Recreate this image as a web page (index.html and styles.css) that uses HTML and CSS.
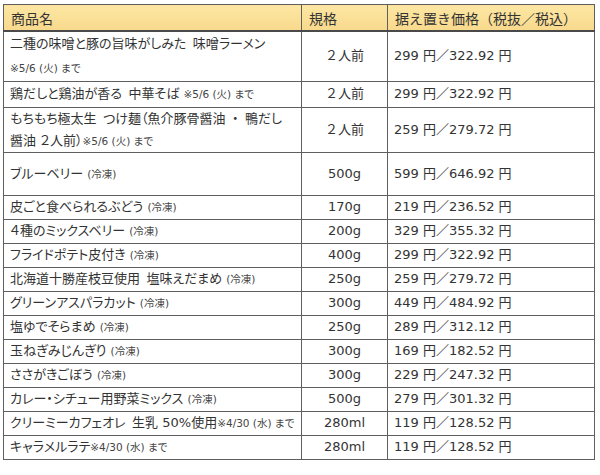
FILE: index.html
```html
<!DOCTYPE html>
<html lang="ja">
<head>
<meta charset="utf-8">
<link rel="stylesheet" href="styles.css">
</head>
<body>
<table class="price-table">
  <colgroup>
    <col class="c-name">
    <col class="c-spec">
    <col class="c-price">
  </colgroup>
  <thead>
    <tr class="head">
      <th>商品名</th>
      <th>規格</th>
      <th>据え置き価格（税抜／税込）</th>
    </tr>
  </thead>
  <tbody>
    <tr class="r50">
      <td class="name two">二種の味噌と豚の旨味がしみた&ensp;味噌ラーメン<br><span class="note">※5/6 (火) まで</span></td>
      <td class="spec">２人前</td>
      <td class="price">299 円／322.92 円</td>
    </tr>
    <tr class="r26">
      <td class="name">鶏だしと鶏油が香る&ensp;中華そば <span class="note">※5/6 (火) まで</span></td>
      <td class="spec">２人前</td>
      <td class="price">299 円／322.92 円</td>
    </tr>
    <tr class="r44">
      <td class="name tight">もちもち極太生&ensp;つけ麺（魚介豚骨醤油&ensp;・&ensp;鴨だし<br>醤油 ２人前）<span class="note">※5/6 (火) まで</span></td>
      <td class="spec">２人前</td>
      <td class="price">259 円／279.72 円</td>
    </tr>
    <tr class="r43">
      <td class="name">ブルーベリー <span class="note">(冷凍)</span></td>
      <td class="spec">500g</td>
      <td class="price">599 円／646.92 円</td>
    </tr>
    <tr class="r24">
      <td class="name">皮ごと食べられるぶどう <span class="note">(冷凍)</span></td>
      <td class="spec">170g</td>
      <td class="price">219 円／236.52 円</td>
    </tr>
    <tr class="r24">
      <td class="name">４種のミックスベリー <span class="note">(冷凍)</span></td>
      <td class="spec">200g</td>
      <td class="price">329 円／355.32 円</td>
    </tr>
    <tr class="r24">
      <td class="name">フライドポテト皮付き <span class="note">(冷凍)</span></td>
      <td class="spec">400g</td>
      <td class="price">299 円／322.92 円</td>
    </tr>
    <tr class="r24">
      <td class="name">北海道十勝産枝豆使用&ensp;塩味えだまめ <span class="note">(冷凍)</span></td>
      <td class="spec">250g</td>
      <td class="price">259 円／279.72 円</td>
    </tr>
    <tr class="r24">
      <td class="name">グリーンアスパラカット <span class="note">(冷凍)</span></td>
      <td class="spec">300g</td>
      <td class="price">449 円／484.92 円</td>
    </tr>
    <tr class="r24">
      <td class="name">塩ゆでそらまめ <span class="note">(冷凍)</span></td>
      <td class="spec">250g</td>
      <td class="price">289 円／312.12 円</td>
    </tr>
    <tr class="r24">
      <td class="name">玉ねぎみじんぎり <span class="note">(冷凍)</span></td>
      <td class="spec">300g</td>
      <td class="price">169 円／182.52 円</td>
    </tr>
    <tr class="r24">
      <td class="name">ささがきごぼう <span class="note">(冷凍)</span></td>
      <td class="spec">300g</td>
      <td class="price">229 円／247.32 円</td>
    </tr>
    <tr class="r24">
      <td class="name">カレー・シチュー用野菜ミックス <span class="note">(冷凍)</span></td>
      <td class="spec">500g</td>
      <td class="price">279 円／301.32 円</td>
    </tr>
    <tr class="r24">
      <td class="name">クリーミーカフェオレ&ensp;生乳 50%使用<span class="note">※4/30 (水) まで</span></td>
      <td class="spec">280ml</td>
      <td class="price">119 円／128.52 円</td>
    </tr>
    <tr class="r24">
      <td class="name">キャラメルラテ<span class="note">※4/30 (水) まで</span></td>
      <td class="spec">280ml</td>
      <td class="price">119 円／128.52 円</td>
    </tr>
  </tbody>
</table>
</body>
</html>
```

FILE: styles.css
```css
html, body {
  background: #ffffff;
}
body {
  margin: 0;
  padding: 4px 0 0 3px;
  font-family: "DejaVu Sans", "Noto Sans CJK JP", sans-serif;
  color: #333333;
}
.price-table {
  border-collapse: collapse;
  width: 591px;
  table-layout: fixed;
  font-size: 13px;
}
.c-name { width: 298px; }
.c-spec { width: 86px; }
.c-price { width: 207px; }

.price-table th,
.price-table td {
  border: 1px solid #5f5f5f;
  padding: 0 6px;
  vertical-align: middle;
  white-space: nowrap;
  overflow: hidden;
  line-height: 20px;
}
.head th {
  height: 25px;
  background: linear-gradient(#fde7a4, #f8d98c);
  font-family: "Noto Sans CJK JP", sans-serif;
  font-weight: normal;
  text-align: left;
  font-size: 14px;
  border-bottom: 2px solid #4a4a4a;
  padding-left: 7px;
}
.name {
  padding-left: 6px;
  font-feature-settings: "palt";
}
.name.two {
  line-height: 24px;
}
.name.tight {
  line-height: 22px;
}
.note {
  font-size: 10.5px;
  color: #444;
}
.spec {
  text-align: center;
}
.price {
  padding-left: 9px;
}
.r50 { height: 50px; }
.r44 { height: 44px; }
.r43 { height: 43px; }
.r26 { height: 26px; }
.r24 { height: 24px; }
```
